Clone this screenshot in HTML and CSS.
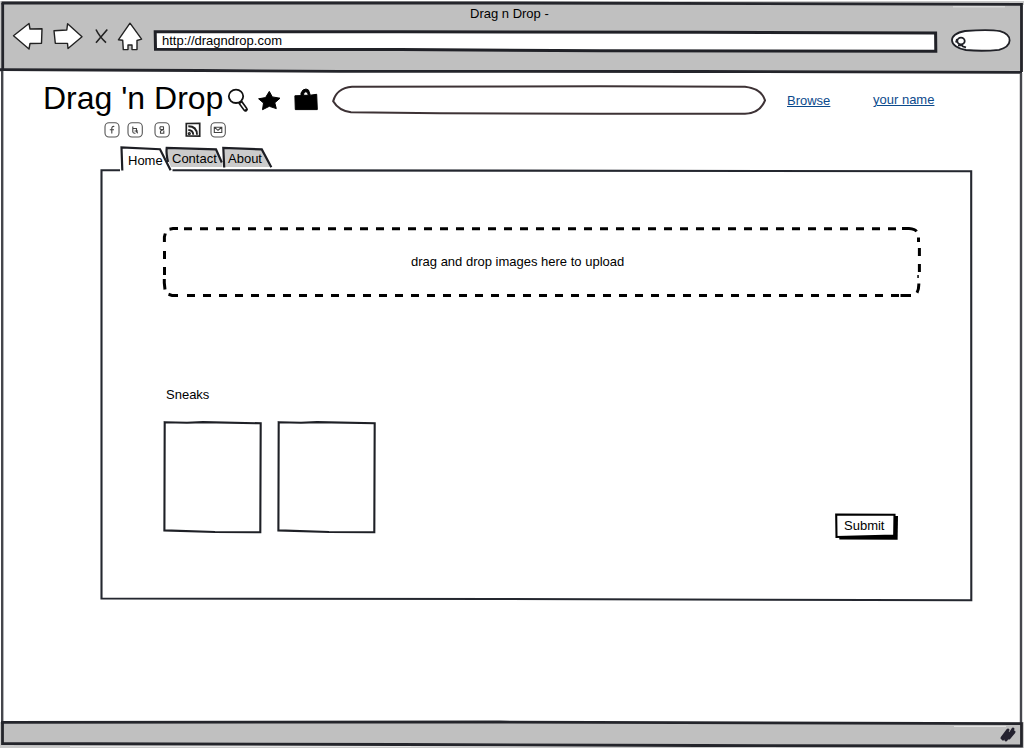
FILE: index.html
```html
<!DOCTYPE html>
<html lang="en">
<head>
<meta charset="utf-8">
<title>Drag n Drop</title>
<link rel="stylesheet" href="styles.css">
</head>
<body>
<div class="window stack">
  <svg class="frame" viewBox="0 0 1024 748" width="1024" height="748">
    <path fill="#c9c9c9" d="M0 1H1024V5H1021V722H1024V748H0V722H1V72H0Z"/>
    <path fill="#fff" d="M3 71 1020 73V722H3Z"/>
    <path fill="#c0c0c0" d="M2 3 1021 4.500V72.500L2 70Z"/>
    <path fill="#c0c0c0" d="M3 722.500 1021 724V746L3 743.500Z"/>
    <path stroke="#f2f2f2" d="M953 6.800H1005M954 726.500H1006M70 746.500H700" opacity=".7"/>
    <g class="border">
      <path d="M1.500 3 500 3 1021.500 4.300V72"/>
      <path d="M2.700 3V70"/>
      <path d="M0 69.700 200 70.500 340 71.400 700 71.500 1022 72.300"/>
      <path class="soft" d="M2.200 71V722M1021 73V723"/>
      <path d="M1 722.300 500 722 1021.500 723.700V746L700 745.500 400 744.500 2.500 743.500V722.300"/>
    </g>
    <g class="grip"><path d="M1002 738 1008 730M1006 740 1013 729M1003 739 1008 733M1009 738 1014 732"/></g>
  </svg>

  <div class="layout">
    <header class="chrome">
      <div class="window-title">Drag n Drop -</div>
      <div class="toolbar">
        <svg class="nav" width="140" height="34" viewBox="10 20 140 34">
          <g class="arrow">
            <path d="M13.500 35.700 29 23.500 30 29 42 28.800 41.500 43.300 30 43.500 29 49Z"/>
            <path d="M82 36.700 67.600 23.700 66.800 30 54 30.700 55.300 43.300 67.500 43.400 68 48.500Z"/>
            <path d="M130 23.200 141.600 39.200 137 40.500 137 49.600 132 49.600 132 45 128 45 128 49.600 123.300 49.600 122.700 40.300 118.400 39.800Z"/>
          </g>
          <path class="cross" d="M96 29.500Q99 36 106 42.700M107.300 29.500 96 42.700"/>
        </svg>
        <div class="address stack">
          <svg width="784" height="22" viewBox="153 30 784 22"><path d="M155.200 31.700 155.500 49.300 400 49.600 600 50.700 935.800 51.200 935.600 33 700 32.300 400 31.800Z"/></svg>
          <span>http://dragndrop.com</span>
        </div>
        <svg class="quick-search" width="62" height="24" viewBox="950 29 62 24">
          <path fill="#fff" d="M965 31C978 30 994 30 1000 31.200 1013 35 1013 46 999 49.800 990 50.800 976 51 966 50 948 47 947 34 965 31Z"/>
          <ellipse cx="961" cy="41" rx="3.700" ry="3.400"/><path d="M958 45.500 961.500 45 963 46.500 966 47.300M957 39 956 42.500"/>
        </svg>
      </div>
    </header>

    <main class="page">
      <div class="masthead">
        <h1>Drag 'n Drop</h1>
        <svg class="tools" width="94" height="30" viewBox="226 86 94 30">
          <path class="handle" d="M240.500 102.500 245.500 109.300"/>
          <path class="handle-core" d="M241 103.300 245.400 109.200"/>
          <ellipse class="lens" cx="236" cy="96.300" rx="7.200" ry="6.700"/>
          <path class="solid" d="M269.300 91.400 272.300 96.900 280 98.200 274.800 102.800 276.300 108.600 269.300 106.300 262.500 109.700 263.500 103 258.600 98.800 265.500 97.600Z"/>
          <path class="solid" d="M294.900 95.800 301 95.600V93L303 90 306 89 308.500 90 310.300 95.200 316.700 94.300 317.300 109.600H295.300ZM303.500 95.300H308.300L307.500 92.500 305.800 91.800 304 92.500Z" fill-rule="evenodd"/>
        </svg>
        <svg class="search" width="436" height="32" viewBox="331 84 436 32"><path d="M352 86.700 600 86.300 745 86.800C757 88 763 94 765 100.300 762 108 755 113.500 745 113.800L600 113.800 440 113.200 351 112.300C342 111 336 106 333.200 101.200 335 94 341 87.500 352 86.700Z"/></svg>
        <a class="browse" href="#">Browse</a>
        <a class="account" href="#">your name</a>
      </div>

      <svg class="social" width="124" height="18" viewBox="103 121 124 18">
        <g class="badge">
          <rect x="105" y="122.700" width="14" height="14.300" rx="4"/>
          <rect x="128" y="122.700" width="14.300" height="14.300" rx="4"/>
          <rect x="155" y="122.700" width="14.300" height="14.300" rx="4"/>
          <rect x="211" y="122.700" width="14.300" height="14.300" rx="4"/>
        </g>
        <g class="mark">
          <path d="M114.300 126.500Q111.800 126 111.800 128.500V133.500M109.800 129.700H114"/>
          <path d="M132.800 126.500V132Q133 133.500 135.500 133.200M132.800 128.500H136M134.500 131H138M136.500 128V131.500Q137 133 138 132.800"/>
          <path d="M163.800 126.700H160.500Q159 128.500 161 129.500H163.500V126.700M163.500 129.500 160.500 131V133.300H163.800V130.500"/>
          <path d="M214.300 127.200H221.800V132.500H214.300ZM214.300 127.200 218 130.300 221.800 127.200"/>
        </g>
        <path class="feed" d="M186.300 123.500 199.700 123.300V136.200L186.300 136Z"/>
        <g class="waves"><path d="M188.300 126.300Q196.800 126.300 197 134.800M188.300 130Q193 130.300 193.300 134.800"/><circle cx="189.300" cy="133.600" r=".7"/></g>
      </svg>

      <nav class="tabs">
        <div class="tab home stack">
          <svg width="52" height="25" viewBox="120 146 52 25"><path fill="#fff" d="M122.300 170.500 121.500 147.500 160 149.200 170.600 170.300"/></svg><span>Home</span>
        </div>
        <div class="tab contact stack">
          <svg width="52" height="25" viewBox="172 146 52 25"><path class="fill" d="M167 148 216 149.500 222.500 163V167H171L167 158Z"/><path d="M168 162Q166 153 166.700 147.800L216 149.300 221.800 162.500"/></svg><span>Contact</span>
        </div>
        <div class="tab about stack">
          <svg width="50" height="25" viewBox="224 146 50 25"><path class="fill" d="M224 148 262 149.500 270 167H224Z"/><path d="M224.200 167.500 223.300 147.800 261.800 149.400 271.300 167.300"/></svg><span>About</span>
        </div>
      </nav>

      <section class="panel stack">
        <svg class="outline" width="874" height="432" viewBox="100 170 874 432"><path d="M120 170.300H101.500V598.500L500 599 971.300 600.300 971.200 171.200 500 170.600 172.500 170.300"/></svg>
        <div class="content">
          <div class="dropzone stack">
            <svg width="762" height="74" viewBox="161 225 762 74">
              <path class="dash" d="M184 228.700H896"/>
              <path class="dash" d="M187 295.500H899"/>
              <path d="M169.500 229.300 173 228.600H178M165.300 233.500 164.400 237V242M164.500 251V259M164.500 267V275M164.300 279V283L165 289.500M168.500 294.300 172 295.400H178M902 228.600H909Q915 229 916.500 231.500M918.500 237.500V242M919.400 248V256M919.400 264V272M917.300 276.500H918.800M918.800 283.500Q919 289 917 292.800M900.500 295.400H911"/>
            </svg>
            <span>drag and drop images here to upload</span>
          </div>
          <h2>Sneaks</h2>
          <div class="bottom">
            <div class="thumbs">
              <svg width="100" height="114" viewBox="163 420 100 114"><path d="M164.700 422.200 187 422.800 203 422.100 260.700 423.300 260.300 532.300 215 532 164.400 530.400Z"/></svg>
              <svg width="100" height="114" viewBox="163 420 100 114"><path d="M164.700 422.200 187 422.800 203 422.100 260.700 423.300 260.300 532.300 215 532 164.400 530.400Z"/></svg>
            </div>
            <button class="submit stack" type="button">
              <svg width="64" height="28" viewBox="835 513 64 28"><path d="M839 516H898L897.600 539.700 839.300 539.500Z"/><path class="face" d="M836.200 514.500 894.500 514.800 894.200 535.500 836.500 537Z"/></svg>
              <span>Submit</span>
            </button>
          </div>
        </div>
      </section>
    </main>
  </div>
</div>
</body>
</html>
```

FILE: styles.css
```css
* { box-sizing: border-box; }
body {
  margin: 0;
  background: #fff;
  color: #000;
  font: 13px/16px "Liberation Sans", Arial, sans-serif;
}
svg { display: block; flex: none; overflow: visible; fill: none; }
.stack { display: grid; }
.stack > * { grid-area: 1 / 1; }

.window { width: 1024px; height: 748px; overflow: hidden; }
.border { stroke: #24252b; stroke-width: 2.8; }
.border .soft { stroke: #45464c; stroke-width: 2.4; }
.grip { stroke: #24222f; stroke-width: 3; stroke-linecap: round; }
.layout { display: flex; flex-direction: column; }

.chrome { height: 73px; padding-top: 6px; }
.window-title { padding-left: 470px; }
.toolbar { display: flex; align-items: flex-start; padding: 0 0 0 10px; }
.nav { margin-top: -2px; }
.arrow { fill: #fff; stroke: #222; stroke-width: 1.4; stroke-linejoin: round; }
.cross { stroke: #222; stroke-width: 1.6; }
.address { width: 784px; margin: 8px 0 0 3px; }
.address path { fill: #fff; stroke: #202127; stroke-width: 3; }
.address span { padding: 3px 0 0 9px; }
.quick-search { margin: 7px 0 0 13px; stroke: #202127; stroke-width: 1.8; }

.page { display: flex; flex-direction: column; }
.masthead { display: flex; align-items: flex-start; height: 48px; padding: 7px 0 0 43px; white-space: nowrap; }
h1 { width: 183px; margin: 0; font-size: 32px; line-height: 36px; font-weight: 400; }
.tools { margin-top: 6px; fill: #000; }
.solid { stroke: #000; stroke-width: 1; stroke-linejoin: round; }
.lens { fill: #fff; stroke: #111; stroke-width: 1.8; }
.handle { stroke: #111; stroke-width: 4.8; stroke-linecap: round; }
.handle-core { stroke: #fff; stroke-width: 1.5; }
.search { margin: 4px 0 0 11px; }
.search path { fill: #fff; stroke: #3d3235; stroke-width: 2.1; }
a { color: #0b4a8c; text-decoration: underline; text-underline-offset: 1px; }
.browse { margin: 13px 0 0 20px; width: 86px; }
.account { margin-top: 12px; }

.social { margin-left: 103px; }
.badge { fill: #fff; stroke: #555; stroke-width: 1.1; }
.mark { stroke: #444; stroke-width: 1.1; }
.feed { fill: #fff; stroke: #222; stroke-width: 1.7; }
.waves { fill: none; stroke: #222; stroke-width: 1.9; }

.tabs { display: flex; height: 24px; margin: 7px 0 0 120px; }
.tab { position: relative; }
.tab path { stroke: #1d1e24; stroke-width: 2.2; }
.tab .fill { fill: #cbcbcb; stroke: none; }
.home { z-index: 1; width: 52px; }
.home span { padding: 7px 0 0 8px; }
.contact { width: 52px; }
.contact span { padding-top: 5px; }
.about span { padding: 5px 0 0 4px; }

.panel { width: 874px; margin-left: 100px; }
.outline { stroke: #24272f; stroke-width: 2.1; }
.content { padding: 55px 0 0 61px; }
.dropzone { width: 762px; }
.dropzone svg { stroke: #000; stroke-width: 3; }
.dropzone .dash { stroke-dasharray: 8 8; }
.dropzone span { padding: 29px 0 0 250px; }
h2 { margin: 88px 0 17px 5px; font-size: 13px; line-height: 16px; font-weight: 400; }
.bottom { display: flex; align-items: flex-start; }
.thumbs { display: flex; gap: 14px; padding-left: 2px; stroke: #1e2026; stroke-width: 2.1; }
.submit { margin: 93px 0 0 458px; padding: 0; border: 0; background: none; color: #000; font: inherit; text-align: left; }
.submit path { fill: #000; }
.submit .face { fill: #fff; stroke: #000; stroke-width: 2.1; }
.submit span { padding: 5px 0 0 9px; }
```
